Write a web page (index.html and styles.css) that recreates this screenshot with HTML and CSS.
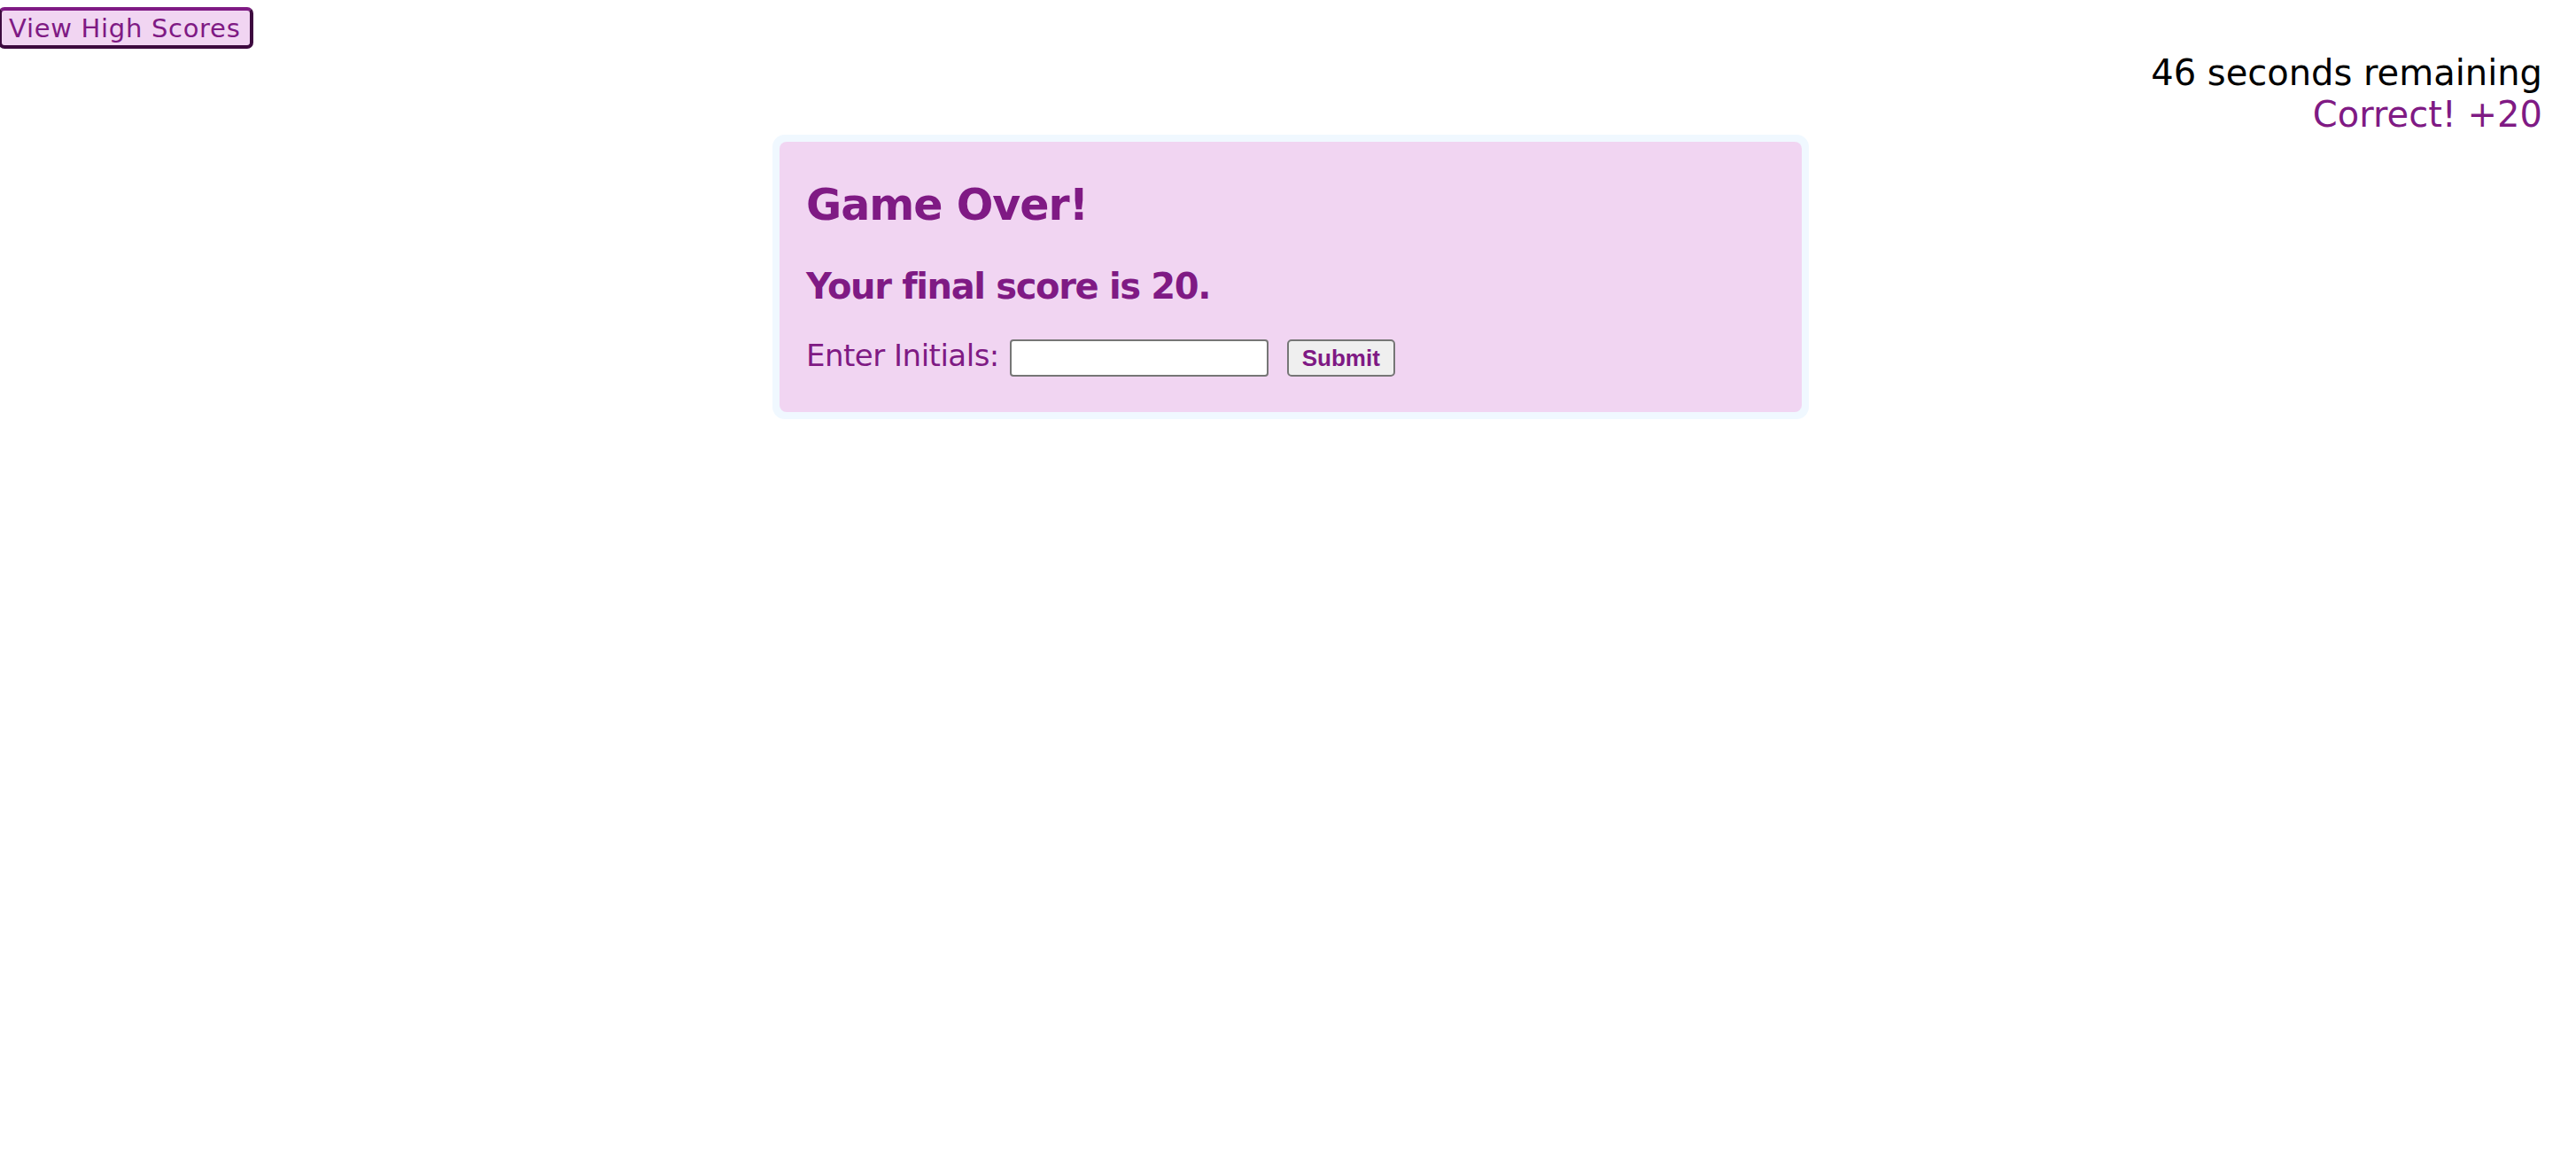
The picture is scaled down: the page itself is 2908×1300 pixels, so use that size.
FILE: index.html
```html
<!DOCTYPE html>
<html lang="en">
<head>
<meta charset="utf-8">
<title>Code Quiz</title>
<link rel="stylesheet" href="styles.css">
</head>
<body>
<header class="top">
  <button class="scores-btn" type="button">View High Scores</button>
</header>
<div class="status">
  <div class="timer">46 seconds remaining</div>
  <div class="feedback">Correct! +20</div>
</div>
<main class="card">
  <div class="card-inner">
    <h1 class="title">Game Over!</h1>
    <h2 class="score">Your final score is 20.</h2>
    <form class="form-row">
      <label class="label" for="initials">Enter Initials:</label>
      <input class="initials" id="initials" type="text">
      <button class="submit" type="button">Submit</button>
    </form>
  </div>
</main>
</body>
</html>
```
FILE: styles.css
```css
html, body {
  margin: 0;
  padding: 0;
  background: #ffffff;
}
body {
  font-family: "DejaVu Sans", Verdana, sans-serif;
}
.top {
  padding-top: 8px;
  height: 47px;
}
.scores-btn {
  margin: 0 0 0 -2px;
  height: 47px;
  width: 288px;
  padding: 0 0 0 8px;
  text-align: left;
  font-family: "DejaVu Sans", Verdana, sans-serif;
  font-size: 29px;
  letter-spacing: 0.7px;
  color: #7f1a84;
  background: #f1d5f2;
  border-width: 4px;
  border-style: solid;
  border-color: #7f1a84 #3d0a3f #3d0a3f #3d0a3f;
  border-radius: 7px;
}
.status {
  text-align: right;
  padding: 4px 38px 0 0;
  font-size: 40px;
  line-height: 46px;
}
.timer {
  color: #000000;
}
.feedback {
  color: #7f1a84;
  margin-top: 1px;
}
.card {
  width: 1170px;
  box-sizing: border-box;
  margin: 0 0 0 calc(50% - 582px);
  padding: 8px;
  background: #f0f8ff;
  border-radius: 14px;
}
.card-inner {
  background: #f1d5f2;
  border-radius: 8px;
  padding: 42px 31px 40px 30px;
  color: #7f1a84;
}
.title {
  margin: 0;
  font-size: 49px;
  line-height: 59px;
  letter-spacing: -1px;
  font-weight: bold;
}
.score {
  margin: 38px 0 0;
  font-size: 40px;
  line-height: 48px;
  letter-spacing: -1.35px;
  font-weight: bold;
}
.form-row {
  margin: 36px 0 0;
  display: flex;
  align-items: flex-start;
}
.label {
  font-size: 34px;
  line-height: 36px;
  letter-spacing: -0.5px;
  margin-right: 12px;
}
.initials {
  box-sizing: border-box;
  width: 292px;
  height: 42px;
  margin: 0;
  border: 2px solid #767676;
  border-radius: 4px;
  background: #ffffff;
}
.submit {
  box-sizing: border-box;
  width: 122px;
  height: 42px;
  margin: 0 0 0 21px;
  padding: 0;
  border: 2px solid #767676;
  border-radius: 5px;
  background: #efefef;
  color: #7f1a84;
  font-family: "Liberation Sans", Arial, sans-serif;
  font-size: 26px;
  font-weight: bold;
}
```
